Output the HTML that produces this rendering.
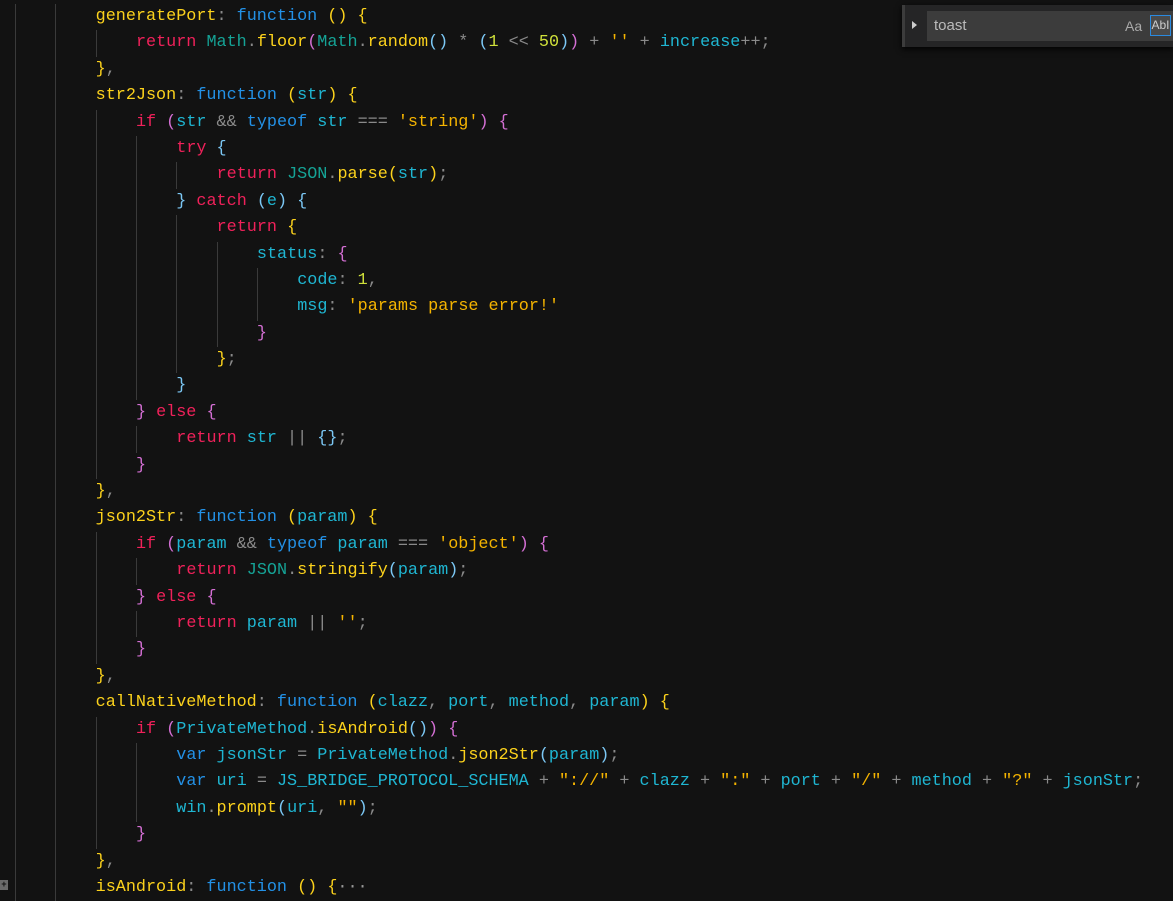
<!DOCTYPE html>
<html><head><meta charset="utf-8"><style>
html,body{margin:0;padding:0;background:#121212;width:1173px;height:900px;overflow:hidden}
#code{position:absolute;left:15px;top:4px;font-family:"Liberation Mono",monospace;font-size:16.8px;line-height:26.4px;color:#8a8a8a}
.l{height:26.4px;white-space:pre}
i{display:inline-block;width:40.32px;height:26.4px;vertical-align:top;box-shadow:inset 1px 0 #3a3a3a}
.y{color:#fcd21c}.p{color:#d46fd4}.b{color:#7cc8f5}.k{color:#f0215a}.f{color:#2391e6}
.c{color:#1fb6d2}.t{color:#15a396}.s{color:#f5b400}.n{color:#cfe03a}.m{color:#fcd21c}.o{color:#8a8a8a}
#find{position:absolute;left:902px;top:5px;width:271px;height:42px;background:#252526;box-shadow:0 2px 6px #000}
#find .bar{position:absolute;left:0;top:0;width:3px;height:42px;background:#3c3c3c}
#find .arr{position:absolute;left:10px;top:16px;width:0;height:0;border-left:5px solid #ccc;border-top:4px solid transparent;border-bottom:4px solid transparent}
#find .inp{position:absolute;left:25px;top:6px;width:246px;height:30px;background:#3c3c3c;font-family:"Liberation Sans",sans-serif;font-size:15px;color:#bbb;line-height:30px;padding-left:7px;box-sizing:border-box}
#find .aa{position:absolute;left:223px;top:6px;font-family:"Liberation Sans",sans-serif;font-size:14px;color:#aaa;line-height:30px}
#find .ab{position:absolute;left:248px;top:10px;width:21px;height:21px;border:1px solid #2a8ae0;box-sizing:border-box;font-family:"Liberation Sans",sans-serif;font-size:12px;color:#ccc;text-align:center;line-height:19px;background:#4a4a4a}
#fold{position:absolute;left:0;top:880px;width:8px;height:10px;background:#6a6a6a;color:#111;font:bold 9px "Liberation Mono",monospace;line-height:10px;text-align:center}
</style></head><body>
<div id="code">
<div class="l"><i></i><i></i><span class="y">generatePort</span>: <span class="f">function</span> <span class="y">()</span> <span class="y">{</span></div>
<div class="l"><i></i><i></i><i></i><span class="k">return</span> <span class="t">Math</span>.<span class="m">floor</span><span class="p">(</span><span class="t">Math</span>.<span class="m">random</span><span class="b">()</span> * <span class="b">(</span><span class="n">1</span> &lt;&lt; <span class="n">50</span><span class="b">)</span><span class="p">)</span> + <span class="s">''</span> + <span class="c">increase</span>++;</div>
<div class="l"><i></i><i></i><span class="y">}</span>,</div>
<div class="l"><i></i><i></i><span class="y">str2Json</span>: <span class="f">function</span> <span class="y">(</span><span class="c">str</span><span class="y">)</span> <span class="y">{</span></div>
<div class="l"><i></i><i></i><i></i><span class="k">if</span> <span class="p">(</span><span class="c">str</span> &amp;&amp; <span class="f">typeof</span> <span class="c">str</span> === <span class="s">'string'</span><span class="p">)</span> <span class="p">{</span></div>
<div class="l"><i></i><i></i><i></i><i></i><span class="k">try</span> <span class="b">{</span></div>
<div class="l"><i></i><i></i><i></i><i></i><i></i><span class="k">return</span> <span class="t">JSON</span>.<span class="m">parse</span><span class="y">(</span><span class="c">str</span><span class="y">)</span>;</div>
<div class="l"><i></i><i></i><i></i><i></i><span class="b">}</span> <span class="k">catch</span> <span class="b">(</span><span class="c">e</span><span class="b">)</span> <span class="b">{</span></div>
<div class="l"><i></i><i></i><i></i><i></i><i></i><span class="k">return</span> <span class="y">{</span></div>
<div class="l"><i></i><i></i><i></i><i></i><i></i><i></i><span class="c">status</span>: <span class="p">{</span></div>
<div class="l"><i></i><i></i><i></i><i></i><i></i><i></i><i></i><span class="c">code</span>: <span class="n">1</span>,</div>
<div class="l"><i></i><i></i><i></i><i></i><i></i><i></i><i></i><span class="c">msg</span>: <span class="s">'params parse error!'</span></div>
<div class="l"><i></i><i></i><i></i><i></i><i></i><i></i><span class="p">}</span></div>
<div class="l"><i></i><i></i><i></i><i></i><i></i><span class="y">}</span>;</div>
<div class="l"><i></i><i></i><i></i><i></i><span class="b">}</span></div>
<div class="l"><i></i><i></i><i></i><span class="p">}</span> <span class="k">else</span> <span class="p">{</span></div>
<div class="l"><i></i><i></i><i></i><i></i><span class="k">return</span> <span class="c">str</span> || <span class="b">{}</span>;</div>
<div class="l"><i></i><i></i><i></i><span class="p">}</span></div>
<div class="l"><i></i><i></i><span class="y">}</span>,</div>
<div class="l"><i></i><i></i><span class="y">json2Str</span>: <span class="f">function</span> <span class="y">(</span><span class="c">param</span><span class="y">)</span> <span class="y">{</span></div>
<div class="l"><i></i><i></i><i></i><span class="k">if</span> <span class="p">(</span><span class="c">param</span> &amp;&amp; <span class="f">typeof</span> <span class="c">param</span> === <span class="s">'object'</span><span class="p">)</span> <span class="p">{</span></div>
<div class="l"><i></i><i></i><i></i><i></i><span class="k">return</span> <span class="t">JSON</span>.<span class="m">stringify</span><span class="b">(</span><span class="c">param</span><span class="b">)</span>;</div>
<div class="l"><i></i><i></i><i></i><span class="p">}</span> <span class="k">else</span> <span class="p">{</span></div>
<div class="l"><i></i><i></i><i></i><i></i><span class="k">return</span> <span class="c">param</span> || <span class="s">''</span>;</div>
<div class="l"><i></i><i></i><i></i><span class="p">}</span></div>
<div class="l"><i></i><i></i><span class="y">}</span>,</div>
<div class="l"><i></i><i></i><span class="y">callNativeMethod</span>: <span class="f">function</span> <span class="y">(</span><span class="c">clazz</span>, <span class="c">port</span>, <span class="c">method</span>, <span class="c">param</span><span class="y">)</span> <span class="y">{</span></div>
<div class="l"><i></i><i></i><i></i><span class="k">if</span> <span class="p">(</span><span class="c">PrivateMethod</span>.<span class="m">isAndroid</span><span class="b">()</span><span class="p">)</span> <span class="p">{</span></div>
<div class="l"><i></i><i></i><i></i><i></i><span class="f">var</span> <span class="c">jsonStr</span> = <span class="c">PrivateMethod</span>.<span class="m">json2Str</span><span class="b">(</span><span class="c">param</span><span class="b">)</span>;</div>
<div class="l"><i></i><i></i><i></i><i></i><span class="f">var</span> <span class="c">uri</span> = <span class="c">JS_BRIDGE_PROTOCOL_SCHEMA</span> + <span class="s">"://"</span> + <span class="c">clazz</span> + <span class="s">":"</span> + <span class="c">port</span> + <span class="s">"/"</span> + <span class="c">method</span> + <span class="s">"?"</span> + <span class="c">jsonStr</span>;</div>
<div class="l"><i></i><i></i><i></i><i></i><span class="c">win</span>.<span class="m">prompt</span><span class="b">(</span><span class="c">uri</span>, <span class="s">""</span><span class="b">)</span>;</div>
<div class="l"><i></i><i></i><i></i><span class="p">}</span></div>
<div class="l"><i></i><i></i><span class="y">}</span>,</div>
<div class="l"><i></i><i></i><span class="y">isAndroid</span>: <span class="f">function</span> <span class="y">()</span> <span class="y">{</span><span style="color:#999">···</span></div>
</div>
<div id="fold">+</div>
<div id="find"><div class="bar"></div><div class="arr"></div><div class="inp">toast</div><div class="aa">Aa</div><div class="ab">AbI</div></div>
</body></html>
